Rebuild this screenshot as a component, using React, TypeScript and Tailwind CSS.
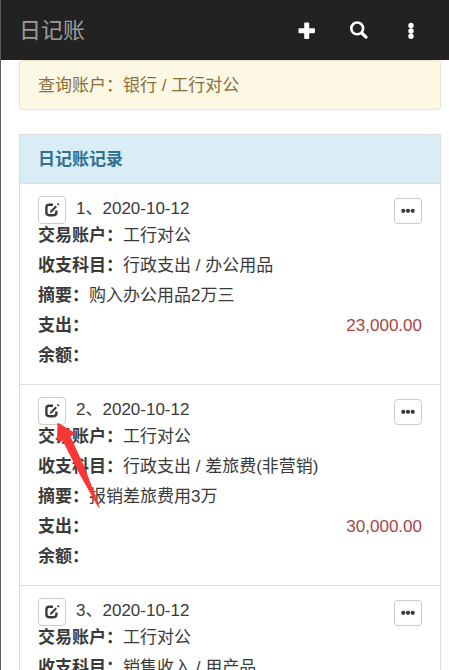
import type { ReactNode } from "react";

type Entry = {
  no: number;
  date: string;
  account: string;
  subject: string;
  summary?: string;
  expense?: string;
};

const entries: Entry[] = [
  {
    no: 1,
    date: "2020-10-12",
    account: "工行对公",
    subject: "行政支出 / 办公用品",
    summary: "购入办公用品2万三",
    expense: "23,000.00",
  },
  {
    no: 2,
    date: "2020-10-12",
    account: "工行对公",
    subject: "行政支出 / 差旅费(非营销)",
    summary: "报销差旅费用3万",
    expense: "30,000.00",
  },
  {
    no: 3,
    date: "2020-10-12",
    account: "工行对公",
    subject: "销售收入 / 用产品",
  },
];

function PlusIcon() {
  return (
    <svg viewBox="0 0 18 18" className="size-[18px]" fill="currentColor">
      <rect x="0.5" y="7.2" width="16.4" height="5" rx="0.9" />
      <rect x="6.2" y="1.5" width="5" height="16.4" rx="0.9" />
    </svg>
  );
}

function SearchIcon() {
  return (
    <svg viewBox="0 0 18 18" className="size-[18px]" fill="none" stroke="currentColor">
      <circle cx="7.2" cy="7.4" r="5.9" strokeWidth="2.6" />
      <path d="M11.8 12l4.2 4.1" strokeWidth="3.2" strokeLinecap="round" />
    </svg>
  );
}

function DotsVerticalIcon() {
  return (
    <svg viewBox="0 0 18 18" className="size-[18px]" fill="currentColor">
      <circle cx="9" cy="4.4" r="2.7" />
      <circle cx="9" cy="10" r="2.7" />
      <circle cx="9" cy="15.3" r="2.7" />
    </svg>
  );
}

function DotsIcon() {
  return (
    <svg viewBox="0 0 14 14" className="size-[14px]" fill="currentColor">
      <circle cx="2.3" cy="6.8" r="2.1" />
      <circle cx="7" cy="6.8" r="2.1" />
      <circle cx="11.7" cy="6.8" r="2.1" />
    </svg>
  );
}

function EditIcon() {
  return (
    <svg viewBox="0 0 16 16" className="size-4" fill="none" stroke="currentColor">
      <path
        d="M9 2.8H5.1C3.3 2.8 2.4 3.8 2.4 5.4v5.2c0 1.6.9 2.6 2.7 2.6h4.6c1.8 0 2.7-1 2.7-2.6V8.4"
        strokeWidth="2.4"
      />
      <path d="M7.4 9.2l4.8-5" strokeWidth="2" />
      <path d="M13.6 2.8l1.1-1.1" strokeWidth="2.2" />
      <path d="M5.7 11l.8-2.8 2 1.9z" fill="currentColor" stroke="none" />
    </svg>
  );
}

function Field({ label, children }: { label: string; children?: ReactNode }) {
  return (
    <div className="flex leading-6">
      <dt className="shrink-0 font-bold">{label}：</dt>
      <dd className="grow">{children}</dd>
    </div>
  );
}

function EntryItem({ entry, children }: { entry: Entry; children?: ReactNode }) {
  return (
    <li className="relative border-t border-[#ddd] px-[18px] pt-3 pb-4">
      <div className="flex items-start">
        <button
          type="button"
          aria-label="编辑"
          className="flex h-7 w-7 items-center justify-center rounded border border-[#ccc] bg-white"
        >
          <EditIcon />
        </button>
        <span className="ml-[10px] leading-[26px]">
          {entry.no}、{entry.date}
        </span>
        <button
          type="button"
          aria-label="更多"
          className="mt-0.5 ml-auto flex h-[26px] w-7 items-center justify-center rounded border border-[#ccc] bg-white"
        >
          <DotsIcon />
        </button>
      </div>
      <dl className="flex flex-col gap-1.5">
        <Field label="交易账户">{entry.account}</Field>
        <Field label="收支科目">{entry.subject}</Field>
        <Field label="摘要">{entry.summary}</Field>
        <Field label="支出">
          <span className="block text-right text-[#a94442]">{entry.expense}</span>
        </Field>
        <Field label="余额" />
      </dl>
      {children}
    </li>
  );
}

function PointerArrow() {
  return (
    <svg
      viewBox="0 0 44 86"
      className="pointer-events-none absolute top-[37px] left-[36px] h-[86px] w-[44px]"
      fill="#fb3636"
    >
      <path d="M1.5 0.5L20 11.5L14.5 14.5L29.5 47.5L43.8 85.8L41.8 84.5L24 53L6.5 18.5L1 20Z" />
    </svg>
  );
}

export default function App() {
  return (
    <div className="flex h-screen flex-col border-l border-[#5b5b63] bg-white font-['Liberation_Sans','Noto_Sans_CJK_SC',sans-serif] text-[17px] text-[#3a3a3a]">
      <nav className="flex h-15 shrink-0 items-center bg-[#222] pr-[29px] pl-[18px] text-white">
        <a href="#" className="text-[22px] text-[#9d9d9d]">
          日记账
        </a>
        <div className="ml-auto flex gap-[34px]">
          <button type="button" aria-label="新增">
            <PlusIcon />
          </button>
          <button type="button" aria-label="搜索">
            <SearchIcon />
          </button>
          <button type="button" aria-label="菜单">
            <DotsVerticalIcon />
          </button>
        </div>
      </nav>

      <main className="min-h-0 flex-1 overflow-y-auto pr-2 pl-[18px] [scrollbar-width:none]">
        <p className="mb-6 rounded border border-[#e8e3cc] bg-[#fcf8e3] px-[18px] pt-[13px] pb-[11px] leading-6 text-[#8a6d3b]">
          查询账户：银行 / 工行对公
        </p>

        <section className="border border-[#ddd]">
          <h2 className="bg-[#d9edf7] px-[18px] pt-[13px] pb-[11px] leading-6 font-bold text-[#31708f]">
            日记账记录
          </h2>
          <ul>
            {entries.map((entry) => (
              <EntryItem key={entry.no} entry={entry}>
                {entry.no === 2 && <PointerArrow />}
              </EntryItem>
            ))}
          </ul>
        </section>
      </main>
    </div>
  );
}
